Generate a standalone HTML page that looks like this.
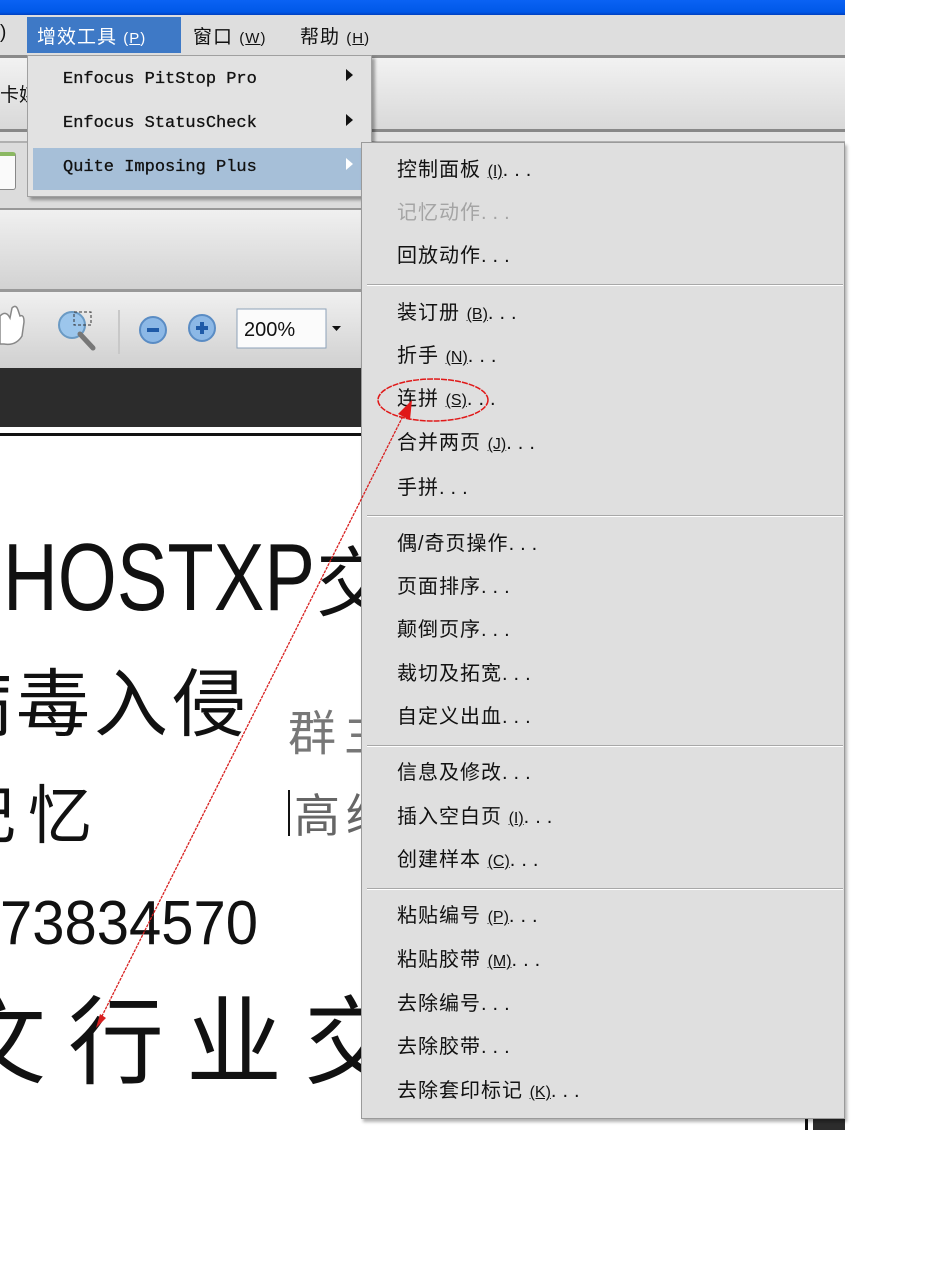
<!DOCTYPE html>
<html><head><meta charset="utf-8">
<style>
*{margin:0;padding:0;box-sizing:border-box}
body{width:950px;height:1272px;background:#fff;position:relative;overflow:hidden;font-family:"Liberation Sans","WenQuanYi Zen Hei","Noto Sans CJK SC",sans-serif}
.a{position:absolute}
.mi{position:absolute;left:397px;font-size:20px;letter-spacing:1px;color:#111;line-height:24px;white-space:nowrap}
.mi .d{letter-spacing:6px}
.mi u{text-decoration:underline;font-size:16px;letter-spacing:0}
.sep{position:absolute;left:367px;width:476px;height:2px;border-top:1px solid #a8a8a8;border-bottom:1px solid #fff}
.sm{position:absolute;left:63px;font-family:"Liberation Mono",monospace;font-size:17px;color:#111;white-space:nowrap;-webkit-text-stroke:0.3px #111}
.tri{position:absolute;width:0;height:0;border-top:6px solid transparent;border-bottom:6px solid transparent;border-left:7px solid #111}
</style></head><body>
<div class="a" style="left:0;top:0;width:845px;height:15px;background:linear-gradient(#0a62f4,#0058e8 80%,#0040c0)"></div>
<div class="a" style="left:0;top:15px;width:845px;height:40px;background:#dedede"></div>
<div class="a" style="left:27px;top:17px;width:154px;height:36px;background:#3e79c6"></div>
<div class="a" style="left:0;top:22px;font-size:19px;color:#111;white-space:nowrap">)</div>
<div class="a" style="left:37px;top:22px;font-size:19px;color:#fff;white-space:nowrap;letter-spacing:1px">增效工具 <span style="font-size:15px">(<u>P</u>)</span></div>
<div class="a" style="left:193px;top:22px;font-size:19px;color:#111;white-space:nowrap;letter-spacing:1px">窗口 <span style="font-size:15px">(<u>W</u>)</span></div>
<div class="a" style="left:300px;top:22px;font-size:19px;color:#111;white-space:nowrap;letter-spacing:1px">帮助 <span style="font-size:15px">(<u>H</u>)</span></div>
<div class="a" style="left:0;top:55px;width:845px;height:3px;background:#8a8a8a"></div>
<div class="a" style="left:0;top:58px;width:845px;height:72px;background:linear-gradient(#f2f2f2,#d8d8d8)"></div>
<div class="a" style="left:0;top:80px;font-size:19px;color:#111">卡媒</div>
<div class="a" style="left:0;top:129px;width:845px;height:3px;background:#888"></div>
<div class="a" style="left:0;top:132px;width:845px;height:10px;background:#e4e4e4"></div>
<div class="a" style="left:0;top:141px;width:845px;height:2px;background:#b0b0b0"></div>
<div class="a" style="left:0;top:143px;width:845px;height:67px;background:#dcdcdc"></div>
<div class="a" style="left:-10px;top:152px;width:26px;height:38px;background:#fafafa;border:1px solid #888;border-top:4px solid #8bb862;border-radius:3px"></div>
<div class="a" style="left:0;top:208px;width:845px;height:2px;background:#999"></div>
<div class="a" style="left:0;top:210px;width:845px;height:80px;background:linear-gradient(#f0f0f0,#d2d2d2)"></div>
<div class="a" style="left:0;top:289px;width:845px;height:3px;background:#999"></div>
<div class="a" style="left:0;top:292px;width:845px;height:76px;background:linear-gradient(#f0f0f0,#d0d0d0)"></div>
<svg class="a" style="left:0;top:292px" width="370" height="76">
<path d="M0 24 Q6 18 10 26 L12 16 Q16 12 18 18 L20 24 Q24 22 24 30 L22 44 Q16 54 4 52 L0 52Z" fill="#fff" stroke="#888" stroke-width="1.5"/>
<circle cx="72" cy="33" r="13" fill="#9cc6ec" stroke="#6a9ac4" stroke-width="2"/>
<line x1="80" y1="42" x2="93" y2="56" stroke="#777" stroke-width="5" stroke-linecap="round"/>
<rect x="74" y="20" width="17" height="13" fill="none" stroke="#333" stroke-dasharray="3 2"/>
<line x1="119" y1="18" x2="119" y2="62" stroke="#c8c8c8" stroke-width="2"/>
<circle cx="153" cy="38" r="13" fill="#8cb8e6" stroke="#5a8cc4" stroke-width="2"/>
<rect x="147" y="36" width="12" height="4" fill="#1e5aa8"/>
<circle cx="202" cy="36" r="13" fill="#8cb8e6" stroke="#5a8cc4" stroke-width="2"/>
<rect x="196" y="34" width="12" height="4" fill="#1e5aa8"/><rect x="200" y="30" width="4" height="12" fill="#1e5aa8"/>
<rect x="237" y="17" width="89" height="39" fill="#fbfbfb" stroke="#8da2b8"/>
<text x="244" y="44" font-size="20" font-family="Liberation Sans" fill="#111">200%</text>
<path d="M332 34 L341 34 L336.5 39Z" fill="#111"/>
</svg>
<div class="a" style="left:0;top:368px;width:845px;height:59px;background:#2c2c2c"></div>
<div class="a" style="left:0;top:427px;width:845px;height:6px;background:#fff"></div>
<div class="a" style="left:0;top:433px;width:845px;height:3px;background:#111"></div>
<div class="a" style="left:805px;top:1118px;width:3px;height:12px;background:#111"></div>
<div class="a" style="left:813px;top:1118px;width:32px;height:12px;background:#2c2c2c"></div>
<svg class="a" style="left:0;top:0" width="950" height="1272">
<text x="3" y="610" font-size="96" font-family="Liberation Sans" textLength="312" lengthAdjust="spacingAndGlyphs" fill="#111">HOSTXP</text>
<text x="316" y="610" font-size="76" font-family="WenQuanYi Zen Hei" fill="#111">交</text>
<text x="-62" y="730" font-size="74" font-family="WenQuanYi Zen Hei" fill="#111" letter-spacing="4">病毒入侵</text>
<text x="-48" y="838" font-size="64" font-family="WenQuanYi Zen Hei" fill="#111" letter-spacing="12">记忆</text>
<text x="0" y="944" font-size="62" font-family="Liberation Sans" fill="#111" textLength="258" lengthAdjust="spacingAndGlyphs">73834570</text>
<text x="-50" y="1076" font-size="96" font-family="WenQuanYi Zen Hei" fill="#111" letter-spacing="22">文行业交</text>
<text x="288" y="750" font-size="48" font-family="WenQuanYi Zen Hei" fill="#777" letter-spacing="8">群主</text>
<rect x="288" y="790" width="2" height="46" fill="#111"/>
<text x="294" y="832" font-size="46" font-family="WenQuanYi Zen Hei" fill="#666" letter-spacing="6">高级</text>
</svg>
<div class="a" style="left:27px;top:55px;width:345px;height:142px;background:#e2e2e2;border:1px solid #a0a0a0;box-shadow:3px 3px 3px rgba(0,0,0,.35)"></div>
<div class="a" style="left:33px;top:148px;width:328px;height:42px;background:#a6bfd8"></div>
<div class="sm" style="top:70px">Enfocus PitStop Pro</div>
<div class="sm" style="top:114px">Enfocus StatusCheck</div>
<div class="sm" style="top:158px">Quite Imposing Plus</div>
<div class="tri" style="left:346px;top:69px"></div>
<div class="tri" style="left:346px;top:114px"></div>
<div class="tri" style="left:346px;top:158px;border-left-color:#fff"></div>
<div class="a" style="left:361px;top:142px;width:484px;height:977px;background:#dfdfdf;border:1px solid #9a9a9a;box-shadow:2px 3px 3px rgba(0,0,0,.3)"></div>
<div class="mi" style="top:158px">控制面板 <u>(I)</u><span class="d">...</span></div>
<div class="mi" style="top:201px;color:#a4a4a4">记忆动作<span class="d">...</span></div>
<div class="mi" style="top:244px">回放动作<span class="d">...</span></div>
<div class="sep" style="top:284px"></div>
<div class="mi" style="top:301px">装订册 <u>(B)</u><span class="d">...</span></div>
<div class="mi" style="top:344px">折手 <u>(N)</u><span class="d">...</span></div>
<div class="mi" style="top:387px">连拼 <u>(S)</u><span class="d">...</span></div>
<div class="mi" style="top:431px">合并两页 <u>(J)</u><span class="d">...</span></div>
<div class="mi" style="top:476px">手拼<span class="d">...</span></div>
<div class="sep" style="top:515px"></div>
<div class="mi" style="top:532px">偶/奇页操作<span class="d">...</span></div>
<div class="mi" style="top:575px">页面排序<span class="d">...</span></div>
<div class="mi" style="top:618px">颠倒页序<span class="d">...</span></div>
<div class="mi" style="top:662px">裁切及拓宽<span class="d">...</span></div>
<div class="mi" style="top:705px">自定义出血<span class="d">...</span></div>
<div class="sep" style="top:745px"></div>
<div class="mi" style="top:761px">信息及修改<span class="d">...</span></div>
<div class="mi" style="top:805px">插入空白页 <u>(I)</u><span class="d">...</span></div>
<div class="mi" style="top:848px">创建样本 <u>(C)</u><span class="d">...</span></div>
<div class="sep" style="top:888px"></div>
<div class="mi" style="top:904px">粘贴编号 <u>(P)</u><span class="d">...</span></div>
<div class="mi" style="top:948px">粘贴胶带 <u>(M)</u><span class="d">...</span></div>
<div class="mi" style="top:992px">去除编号<span class="d">...</span></div>
<div class="mi" style="top:1035px">去除胶带<span class="d">...</span></div>
<div class="mi" style="top:1079px">去除套印标记 <u>(K)</u><span class="d">...</span></div>
<svg class="a" style="left:0;top:0" width="950" height="1272">
<ellipse cx="433" cy="400" rx="55" ry="21" fill="none" stroke="#e01818" stroke-width="1.5" stroke-dasharray="6 1"/>
<line x1="100" y1="1020" x2="405" y2="412" stroke="#d82020" stroke-width="1.3" stroke-dasharray="3 1"/>
<path d="M412 400 L398 414 L410 420Z" fill="#e01818"/>
<path d="M96 1028 L100 1014 L106 1018Z" fill="#d82020"/>
</svg>
</body></html>
